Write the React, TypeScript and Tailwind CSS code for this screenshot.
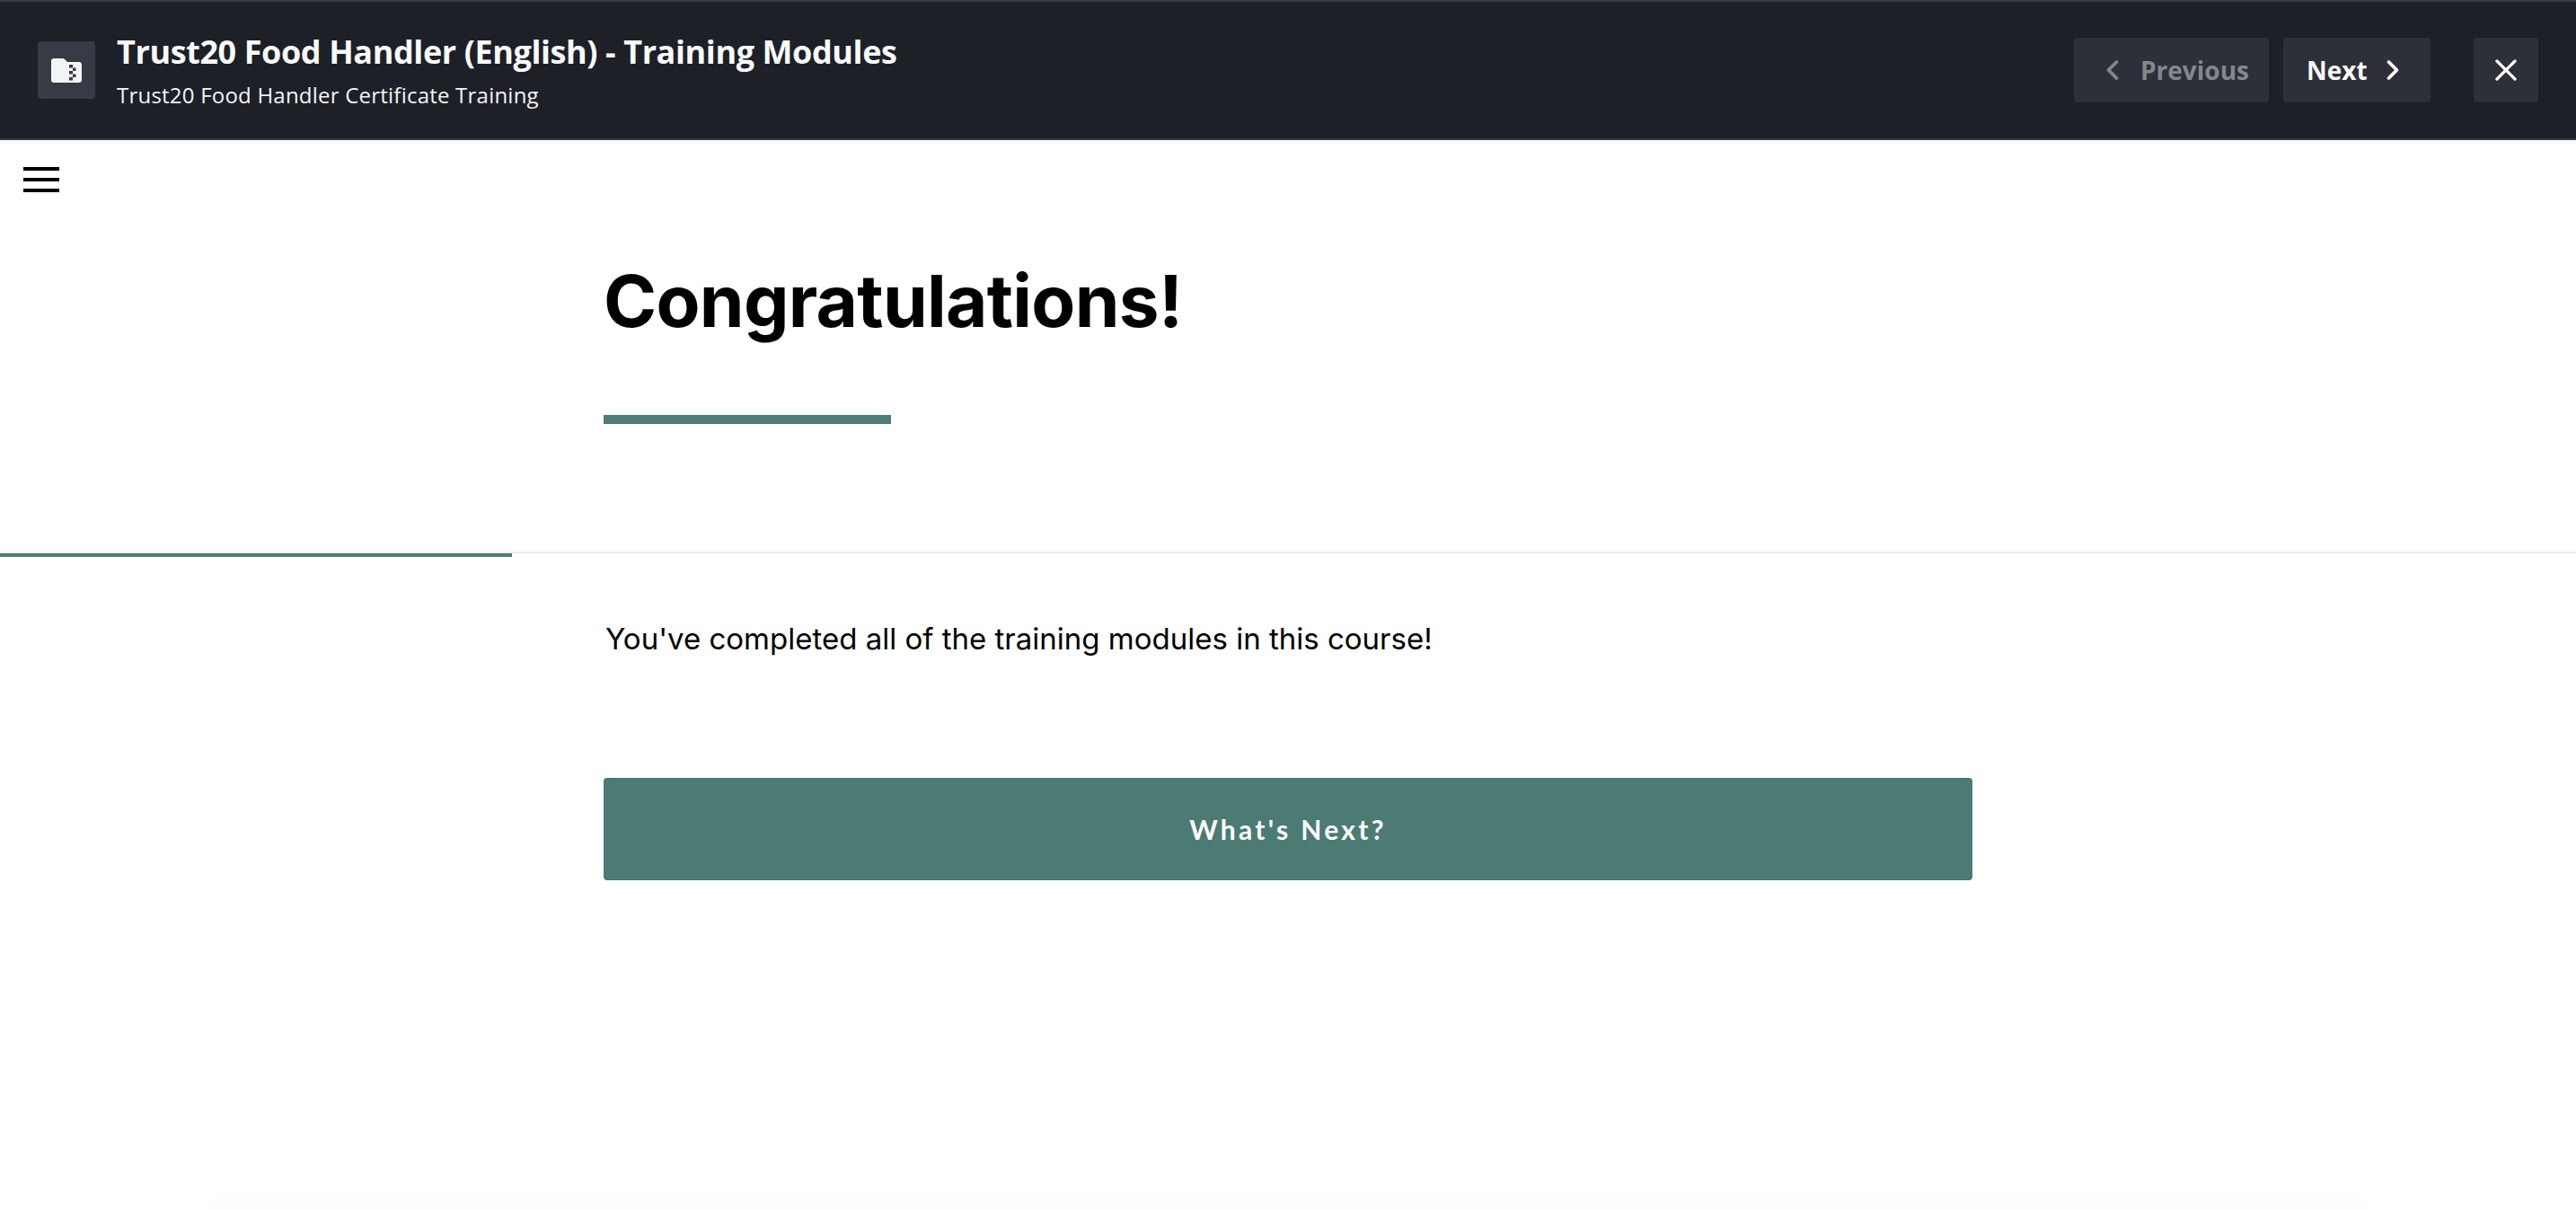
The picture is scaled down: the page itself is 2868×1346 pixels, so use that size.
import { ChevronLeft, ChevronRight, X } from 'lucide-react'

function FolderZipIcon() {
  return (
    <svg width="34" height="27" viewBox="0 0 34 27" aria-hidden="true">
      <path
        d="M3 0h9.500c1 0 1.900.4 2.600 1.100L18 4h13c1.700 0 3 1.300 3 3v17c0 1.700-1.300 3-3 3H3c-1.700 0-3-1.300-3-3V3c0-1.700 1.300-3 3-3z"
        fill="#f3f4f6"
      />
      <rect x="20" y="7" width="4" height="3.500" fill="#363b45" />
      <rect x="24" y="10.500" width="3.500" height="3.500" fill="#363b45" />
      <rect x="20" y="14" width="4" height="3.500" fill="#363b45" />
      <rect x="24" y="17.500" width="3.500" height="3.500" fill="#363b45" />
      <rect x="20" y="21" width="4" height="3.500" fill="#363b45" />
    </svg>
  )
}

function Header() {
  return (
    <header className="flex h-[156px] items-center justify-between border-y-2 border-[#363b45] bg-[#1d2027] px-[42px] font-['Open_Sans',sans-serif]">
      <div className="flex items-center gap-6">
        <div className="flex size-16 items-center justify-center rounded bg-[#363b45]">
          <FolderZipIcon />
        </div>
        <div>
          <h1 className="text-[36px] leading-[48px] font-bold tracking-[-0.4px] text-[#f9fafb]">
            Trust20 Food Handler (English) - Training Modules
          </h1>
          <p className="mt-2 text-[24px] leading-8 tracking-[0.22px] text-[#f3f4f6]">
            Trust20 Food Handler Certificate Training
          </p>
        </div>
      </div>
      <div className="flex items-center">
        <button className="flex h-[72px] w-[217px] items-center gap-[13px] rounded bg-[#2d3039] pl-[25px] text-[28px] font-bold text-[#85878d]">
          <ChevronLeft className="size-9" strokeWidth={2.5} />
          Previous
        </button>
        <button className="ml-4 flex h-[72px] w-[164px] items-center gap-[10px] rounded bg-[#2d3039] pl-[26px] text-[28px] font-bold text-[#f9fafb]">
          Next
          <ChevronRight className="size-9" strokeWidth={2.5} />
        </button>
        <button className="ml-12 flex h-[72px] w-[72px] items-center justify-center rounded bg-[#2d3039] text-[#f9fafb]">
          <X className="size-10" strokeWidth={2} />
        </button>
      </div>
    </header>
  )
}

export default function App() {
  return (
    <div className="flex h-[1346px] flex-col overflow-hidden bg-white">
      <Header />
      <div className="flex h-[458px] flex-col">
        <div className="flex h-[58px] items-end pl-[26px]">
          <div className="flex h-7 w-10 flex-col justify-between">
            <span className="h-1 bg-black" />
            <span className="h-1 bg-black" />
            <span className="h-1 bg-black" />
          </div>
        </div>
        <div className="ml-[672px] flex-1">
          <h2 className="mt-[71px] font-['Inter',sans-serif] text-[80px] leading-[100px] font-bold tracking-[-0.7px] text-black">
            Congratulations!
          </h2>
          <div className="mt-[77px] h-[10px] w-[320px] bg-[#4c7c74]" />
        </div>
      </div>
      <div className="h-[2px] bg-[#ebebeb]" />
      <div className="h-1 w-[570px] bg-[#4c7c74]" />
      <div className="ml-[672px] w-[1524px]">
        <p className="mt-[64px] pl-[2px] font-['Inter',sans-serif] text-[33px] leading-[54px] text-black">
          You've completed all of the training modules in this course!
        </p>
        <button className="mt-[128px] flex h-[114px] w-full items-center justify-center rounded bg-[#4b7b73] font-['Lato',sans-serif] text-[30px] font-bold tracking-[3.3px] text-white">
          What's Next?
        </button>
      </div>
      <div className="mx-[240px] mt-auto h-0 shadow-[0_0_40px_12px_rgba(0,0,0,0.015)]" />
    </div>
  )
}
